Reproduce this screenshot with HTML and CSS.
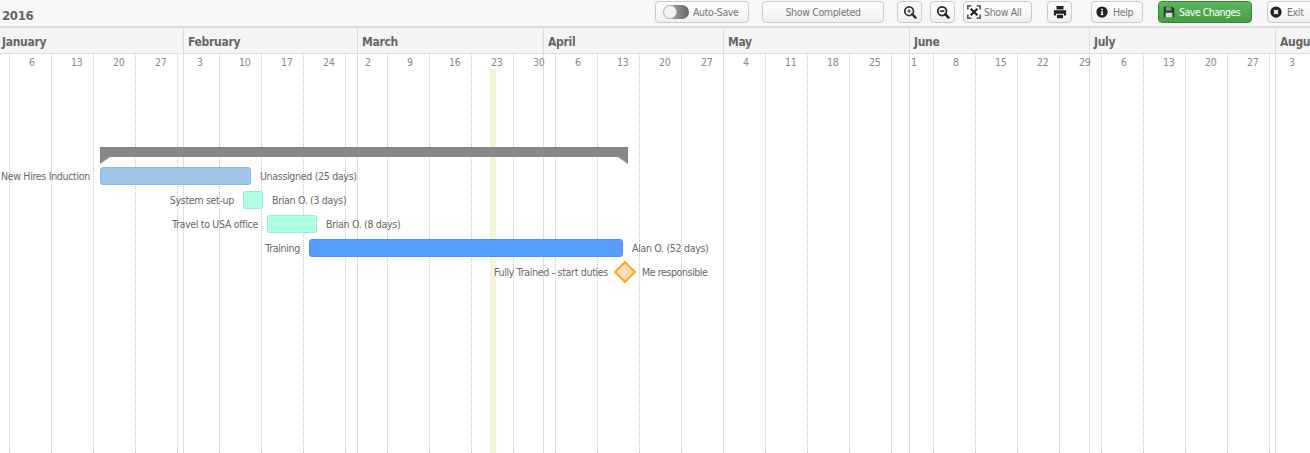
FILE: index.html
```html
<!DOCTYPE html>
<html lang="en">
<head>
<meta charset="utf-8">
<title>Gantt 2016</title>
<link rel="stylesheet" href="styles.css">
</head>
<body>
<header class="toolbar">
  <div class="year">2016</div>
  <div class="actions">
    <button class="btn btn-autosave"><span class="switch"><span class="knob"></span></span>Auto-Save</button>
    <button class="btn btn-completed">Show Completed</button>
    <button class="btn btn-icon btn-zoomin" aria-label="Zoom in"><svg viewBox="0 0 16 16" class="ico"><circle cx="7" cy="7" r="5" fill="none" stroke="#333" stroke-width="2"/><path d="M10.500 10.500l3.800 3.800" stroke="#333" stroke-width="2.800" stroke-linecap="round"/><path d="M4.800 7h4.400M7 4.800v4.400" stroke="#555" stroke-width="1.300"/></svg></button>
    <button class="btn btn-icon btn-zoomout" aria-label="Zoom out"><svg viewBox="0 0 16 16" class="ico"><circle cx="7" cy="7" r="5" fill="none" stroke="#222" stroke-width="2"/><path d="M10.500 10.500l3.800 3.800" stroke="#222" stroke-width="2.800" stroke-linecap="round"/><path d="M4.400 7h5.200" stroke="#222" stroke-width="1.800"/></svg></button>
    <button class="btn btn-showall"><svg viewBox="0 0 16 16" class="ico"><path d="M1 5V1h4M11 1h4v4M15 11v4h-4M5 15H1v-4" fill="none" stroke="#333" stroke-width="1.600"/><path d="M4.200 4.200l7.600 7.600M11.800 4.200l-7.600 7.600" stroke="#222" stroke-width="2.400"/></svg>Show All</button>
    <button class="btn btn-icon btn-print" aria-label="Print"><svg viewBox="0 0 16 16" class="ico"><path d="M4 1h8v4H4zM1 6h14v6h-2.500v-2h-9v2H1zM4.500 11h7v4h-7z" fill="#222"/></svg></button>
    <button class="btn btn-help"><svg viewBox="0 0 16 16" class="ico ico-sm"><circle cx="8" cy="8" r="7.500" fill="#222"/><rect x="7" y="7" width="2.200" height="5" fill="#fff"/><rect x="6.200" y="11" width="3.800" height="1.200" fill="#fff"/><rect x="7" y="3.600" width="2.200" height="2" fill="#fff"/></svg>Help</button>
    <button class="btn btn-save"><svg viewBox="0 0 16 16" class="ico ico-sm"><path d="M1 1h12l2 2v12H1z" fill="#2c3e34"/><rect x="4" y="1.500" width="7" height="4.500" fill="#7f9a86"/><rect x="3.500" y="9" width="9" height="6" fill="#d5ddd6"/></svg>Save Changes</button>
    <button class="btn btn-exit"><svg viewBox="0 0 16 16" class="ico ico-sm"><circle cx="8" cy="8" r="7.500" fill="#222"/><path d="M5.500 5.500l5 5M10.500 5.500l-5 5" stroke="#fff" stroke-width="2.600"/></svg>Exit</button>
  </div>
</header>
<div class="months">
  <div class="month" style="width:184px">January</div>
  <div class="month" style="width:174px">February</div>
  <div class="month" style="width:186px">March</div>
  <div class="month" style="width:180px">April</div>
  <div class="month" style="width:186px">May</div>
  <div class="month" style="width:180px">June</div>
  <div class="month" style="width:186px">July</div>
  <div class="month month-last" style="width:34px">August</div>
</div>
<main class="chart">
  <div class="grid-weeks"></div>
  <div class="grid-months">
    <i style="left:183px"></i><i style="left:357px"></i><i style="left:543px"></i><i style="left:723px"></i><i style="left:909px"></i><i style="left:1089px"></i><i style="left:1275px"></i>
  </div>
  <div class="today"></div>
  <div class="days">
    <span>6</span><span>13</span><span>20</span><span>27</span><span>3</span><span>10</span><span>17</span><span>24</span><span>2</span><span>9</span><span>16</span><span>23</span><span>30</span><span>6</span><span>13</span><span>20</span><span>27</span><span>4</span><span>11</span><span>18</span><span>25</span><span>1</span><span>8</span><span>15</span><span>22</span><span>29</span><span>6</span><span>13</span><span>20</span><span>27</span><span>3</span>
  </div>
  <div class="rows">
    <div class="summary"></div>
    <div class="row"><span class="lead lead-wide" style="width:100px">New Hires Induction</span><span class="bar bar-blue" style="width:151px"></span><span class="tail">Unassigned (25 days)</span></div>
    <div class="row"><span class="lead" style="width:243px">System set-up</span><span class="bar bar-mint" style="width:20px"></span><span class="tail">Brian O. (3 days)</span></div>
    <div class="row"><span class="lead" style="width:267px">Travel to USA office</span><span class="bar bar-mint" style="width:50px"></span><span class="tail">Brian O. (8 days)</span></div>
    <div class="row"><span class="lead" style="width:309px">Training</span><span class="bar bar-strong" style="width:314px"></span><span class="tail">Alan O. (52 days)</span></div>
    <div class="row"><span class="lead lead-ms" style="width:616px">Fully Trained - start duties</span><span class="diamond-box"><span class="diamond"></span></span><span class="tail tail-ms">Me responsible</span></div>
  </div>
</main>
</body>
</html>
```
FILE: styles.css
```css
* { box-sizing: border-box; }
html, body { margin: 0; height: 100%; overflow: hidden; background: #fff; }
body { font-family: "DejaVu Sans", sans-serif; font-stretch: condensed; font-size: 10.5px; letter-spacing: -0.3px; color: #666; }

.toolbar { height: 28px; background: #f7f7f7; border-bottom: 2px solid #ddd; display: flex; align-items: flex-start; justify-content: space-between; }
.year { font: bold condensed 13px "DejaVu Sans", sans-serif; letter-spacing: -0.3px; color: #666; padding: 8px 0 0 2px; }
.actions { display: flex; width: 655px; flex: none; padding-top: 1px; }
.btn { height: 22px; font: condensed 10.5px "DejaVu Sans", sans-serif; letter-spacing: -0.35px; color: #777; background: linear-gradient(#fff, #efefef); border: 1px solid #ccc; border-radius: 4px; padding: 0 0 1px; display: flex; align-items: center; justify-content: center; gap: 4px; flex: none; }
.btn-icon { width: 25px; }
.ico { width: 14px; height: 14px; display: block; flex: none; }
.ico-sm { width: 12px; height: 12px; }
.btn-autosave { width: 94px; margin-right: 13px; justify-content: flex-start; padding-left: 7px; }
.switch { width: 26px; height: 14px; border-radius: 7px; background: linear-gradient(to right, #bbb, #666); display: block; position: relative; }
.knob { position: absolute; left: 0; top: 0; width: 14px; height: 14px; border-radius: 50%; background: #f4f4f4; border: 1px solid #bbb; display: block; }
.btn-completed { width: 122px; margin-right: 13px; }
.btn-zoomin { margin-right: 8px; }
.btn-zoomout { margin-right: 8px; }
.btn-showall { width: 69px; margin-right: 15px; justify-content: flex-start; padding-left: 3px; gap: 3px; }
.btn-print { margin-right: 19px; }
.btn-help { width: 52px; margin-right: 15px; justify-content: flex-start; padding-left: 4px; gap: 5px; }
.btn-save { width: 94px; margin-right: 15px; color: #fff; letter-spacing: -0.5px; background: linear-gradient(#5cb85c, #449d44); border-color: #398439; justify-content: flex-start; padding-left: 4px; gap: 4px; }
.btn-exit { width: 48px; justify-content: flex-start; padding-left: 2px; gap: 5px; }

.months { display: flex; height: 26px; background: #f5f5f5; border-bottom: 1px solid #ddd; }
.month { flex: none; font: bold condensed 12px "DejaVu Sans", sans-serif; color: #666; padding: 7px 0 0 4px; border-right: 1px solid #ddd; white-space: nowrap; }
.month:first-child { padding-left: 2px; }
.month-last { border-right: 0; overflow: hidden; }

.chart { position: relative; height: 399px; overflow: hidden; }
.grid-weeks { position: absolute; inset: 0 0 0 9px; background-image: repeating-linear-gradient(to bottom, #c4c4c4 0 1px, transparent 1px 2px); -webkit-mask-image: repeating-linear-gradient(to right, #000 0 1px, transparent 1px 42px); mask-image: repeating-linear-gradient(to right, #000 0 1px, transparent 1px 42px); }
.grid-months i { position: absolute; top: 0; bottom: 0; width: 1px; background: #ddd; }
.today { position: absolute; left: 490px; top: 15px; bottom: 0; width: 6px; background: #f5f5d5; }
.days { display: flex; position: relative; padding: 1px 0 0 28px; height: 16px; }
.days span { flex: none; width: 42px; padding-left: 1px; font-size: 10.5px; color: #888; line-height: 14px; }
.rows { position: relative; padding-top: 77px; }
.summary { position: relative; margin-left: 100px; width: 528px; height: 10px; background: #888; margin-bottom: 7px; }
.summary::before, .summary::after { content: ""; position: absolute; top: 10px; width: 0; height: 0; border-style: solid; }
.summary::before { left: 0; border-width: 7px 10px 0 0; border-color: #888 transparent transparent transparent; }
.summary::after { right: 0; border-width: 7px 0 0 10px; border-color: #888 transparent transparent transparent; }
.row { display: flex; align-items: center; height: 24px; white-space: nowrap; }
.lead { flex: none; text-align: right; padding-right: 9px; }
.lead-wide { padding-right: 10px; }
.lead-ms { padding-right: 8px; }
.tail { padding-left: 9px; }
.tail-ms { letter-spacing: -0.4px; }
.bar { flex: none; height: 18px; border-radius: 3px; border: 1px solid; }
.bar-blue { background: #9fc5e8; border-color: #8fb8de; }
.bar-mint { background: #aeffe5; border-color: #9aecd2; }
.bar-strong { background: #569eff; border-color: #4a93f2; }
.diamond-box { flex: none; width: 17px; height: 24px; display: flex; align-items: center; justify-content: center; }
.diamond { width: 16px; height: 16px; background: #fedfb5; border: 2px solid #f9a825; transform: rotate(45deg); flex: none; }
```
